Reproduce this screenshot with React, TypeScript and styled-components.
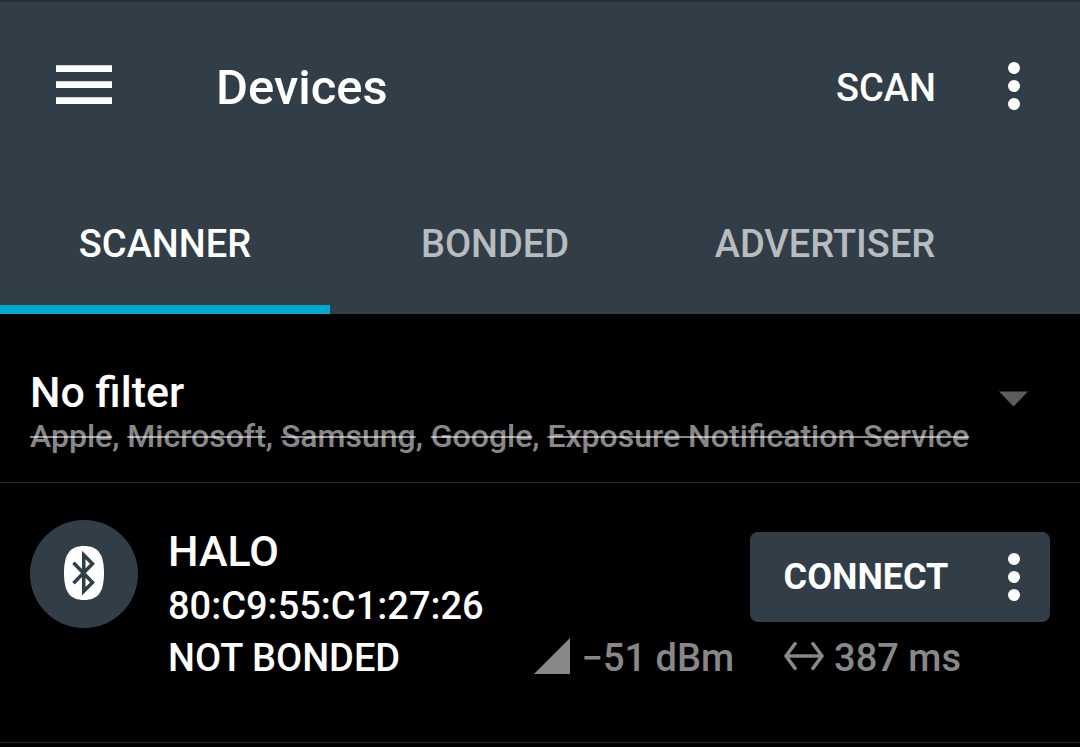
import React from "react";
import styled, { createGlobalStyle } from "styled-components";

const slate = "#323e47";
const muted = "rgba(255, 255, 255, 0.54)";

const GlobalStyle = createGlobalStyle`
  * { box-sizing: border-box; }
  html, body, #root { min-height: 100vh; }
  body {
    margin: 0;
    background: #000;
    color: #fff;
    font-family: Roboto, "Liberation Sans", sans-serif;
    font-weight: 500;
  }
  button {
    border: 0;
    padding: 0;
    background: none;
    color: inherit;
    font: inherit;
    cursor: pointer;
  }
  svg { display: block; flex: none; }
  h1, h2, p { margin: 0; font-weight: 500; }
`;

const Header = styled.header`
  background: ${slate};
  border-top: 2px solid #25313a;
`;

const AppBar = styled.div`
  display: flex;
  align-items: center;
  height: 168px;
  padding: 0 42px 0 56px;
`;

const Title = styled.h1`
  flex: 1;
  margin-left: 104px;
  padding-top: 4px;
  font-size: 49px;
  line-height: 56px;
`;

const IconButton = styled.button`
  display: flex;
  align-items: center;
  justify-content: center;
  height: 90px;
`;

const MoreButton = styled(IconButton)`
  width: 48px;
`;

const ScanButton = styled.button`
  margin-right: 54px;
  padding-top: 4px;
  font-size: 38px;
  line-height: 52px;
`;

const Tabs = styled.nav`
  display: grid;
  grid-template-columns: repeat(3, 1fr);
  padding-right: 90px;
`;

const Tab = styled.button<{ $active?: boolean }>`
  height: 144px;
  padding-top: 12px;
  border-bottom: 9px solid ${(p) => (p.$active ? "#00a9ce" : "transparent")};
  color: ${(p) => (p.$active ? "#fff" : "rgba(255, 255, 255, 0.66)")};
  font-size: 38px;
  line-height: 52px;
`;

const Filter = styled.button`
  display: flex;
  align-items: flex-start;
  justify-content: space-between;
  width: 100%;
  padding: 54px 52px 26px 30px;
  border-bottom: 1px solid #2a2a2a;
  text-align: left;
`;

const FilterTitle = styled.span`
  display: block;
  font-size: 43px;
  line-height: 48px;
`;

const FilterExcluded = styled.span`
  display: block;
  color: ${muted};
  font-size: 32px;
  line-height: 40px;

  s { text-decoration-thickness: 2px; }
`;

const Caret = styled.svg`
  margin-top: 23px;
`;

const Device = styled.li`
  display: flex;
  gap: 30px;
  padding: 37px 30px 58px;
  border-bottom: 1px solid #2a2a2a;
`;

const DeviceList = styled.ul`
  margin: 0;
  padding: 0;
  list-style: none;
`;

const Avatar = styled.div`
  display: flex;
  flex: none;
  align-items: center;
  justify-content: center;
  width: 108px;
  height: 108px;
  border-radius: 50%;
  background: ${slate};
`;

const DeviceBody = styled.div`
  flex: 1;
  padding-top: 2px;
`;

const Line = styled.div`
  display: flex;
  align-items: center;
  justify-content: space-between;
`;

const DeviceName = styled.h2`
  font-size: 43px;
  line-height: 58px;
`;

const DeviceText = styled.p`
  font-size: 38px;
  line-height: 52px;
`;

const ConnectGroup = styled.div`
  display: flex;
  width: 300px;
  height: 90px;
  padding-right: 12px;
  border-radius: 8px;
  background: ${slate};
`;

const ConnectButton = styled.button`
  flex: 1;
  padding-right: 8px;
  font-size: 36px;
  font-weight: 700;
`;

const Metrics = styled.div`
  display: flex;
  gap: 50px;
  padding-right: 89px;
  color: #888;
`;

const Metric = styled.span<{ $gap: number }>`
  display: flex;
  align-items: center;
  gap: ${(p) => p.$gap}px;
  font-size: 38px;
  line-height: 52px;
`;

const Dots = () => (
  <svg width="12" height="48" viewBox="0 0 12 48" fill="currentColor" aria-hidden="true">
    <circle cx="6" cy="6" r="6" />
    <circle cx="6" cy="24" r="6" />
    <circle cx="6" cy="42" r="6" />
  </svg>
);

const MenuIcon = () => (
  <svg width="56" height="42" viewBox="0 0 56 42" fill="currentColor" aria-hidden="true">
    <path d="M0 .3h56V7H0zM0 16.3h56V23H0zM0 32.3h56V39H0z" />
  </svg>
);

const BluetoothIcon = () => (
  <svg width="40" height="56" viewBox="0 0 40 56" aria-hidden="true">
    <path d="M20 0C34 0 40 8 40 27S34 54 20 54 0 46 0 27 6 0 20 0z" fill="#fff" />
    <path
      d="M9.5 16.8L28.5 36.5L19.75 45.25V9L28.5 17.75L9.5 37.2"
      fill="none"
      stroke={slate}
      strokeWidth="3.5"
    />
  </svg>
);

const SignalIcon = () => (
  <svg width="36" height="40" viewBox="0 0 36 40" fill="currentColor" aria-hidden="true">
    <path d="M36 0v36H0z" />
  </svg>
);

const IntervalIcon = () => (
  <svg
    width="40"
    height="32"
    viewBox="0 0 40 32"
    fill="none"
    stroke="currentColor"
    strokeWidth="3.6"
    strokeLinecap="round"
    strokeLinejoin="round"
    aria-hidden="true"
  >
    <path d="M11 1.800L2 14L11 26.200M29 1.800L38 14L29 26.200M2 14H38" />
  </svg>
);

const excluded = ["Apple", "Microsoft", "Samsung", "Google", "Exposure Notification Service"];

export default function App() {
  return (
    <>
      <GlobalStyle />
      <Header>
        <AppBar>
          <IconButton aria-label="Open menu">
            <MenuIcon />
          </IconButton>
          <Title>Devices</Title>
          <ScanButton>SCAN</ScanButton>
          <MoreButton aria-label="More options">
            <Dots />
          </MoreButton>
        </AppBar>
        <Tabs>
          <Tab $active aria-current="page">SCANNER</Tab>
          <Tab>BONDED</Tab>
          <Tab>ADVERTISER</Tab>
        </Tabs>
      </Header>
      <main>
        <Filter aria-expanded="false">
          <span>
            <FilterTitle>No filter</FilterTitle>
            <FilterExcluded>
              {excluded.map((name, i) => (
                <React.Fragment key={name}>
                  {i > 0 && ", "}
                  <s>{name}</s>
                </React.Fragment>
              ))}
            </FilterExcluded>
          </span>
          <Caret width="29" height="16" viewBox="0 0 29 16" aria-hidden="true">
            <path d="M0 .5h29L14.500 15.500z" fill="#5c5c5c" />
          </Caret>
        </Filter>
        <DeviceList>
          <Device>
            <Avatar>
              <BluetoothIcon />
            </Avatar>
            <DeviceBody>
              <Line>
                <div>
                  <DeviceName>HALO</DeviceName>
                  <DeviceText>80:C9:55:C1:27:26</DeviceText>
                </div>
                <ConnectGroup>
                  <ConnectButton>CONNECT</ConnectButton>
                  <MoreButton aria-label="Connection options">
                    <Dots />
                  </MoreButton>
                </ConnectGroup>
              </Line>
              <Line>
                <DeviceText>NOT BONDED</DeviceText>
                <Metrics>
                  <Metric $gap={12}>
                    <SignalIcon />
                    −51 dBm
                  </Metric>
                  <Metric $gap={10}>
                    <IntervalIcon />
                    387 ms
                  </Metric>
                </Metrics>
              </Line>
            </DeviceBody>
          </Device>
        </DeviceList>
      </main>
    </>
  );
}
